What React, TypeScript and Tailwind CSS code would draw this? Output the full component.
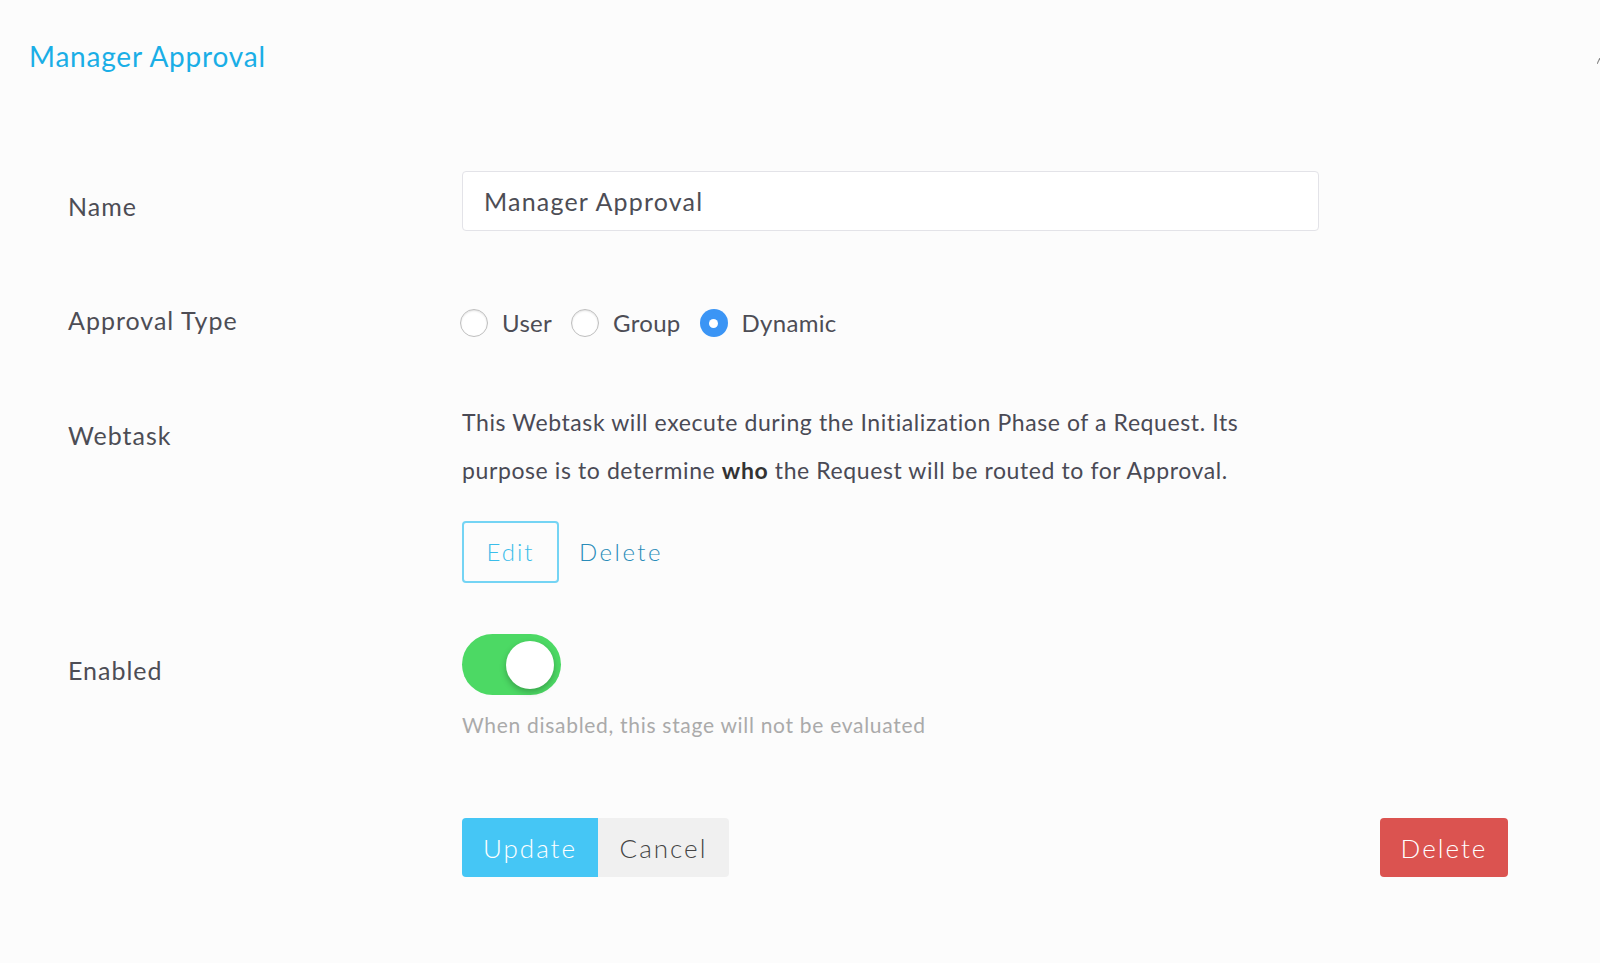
import { useState } from 'react';

const font = { fontFamily: 'Lato, "Open Sans", sans-serif' };

function Radio({ label, checked }: { label: string; checked?: boolean }) {
  return (
    <label className="flex items-center gap-[14px] mr-[19px]">
      {checked ? (
        <span className="w-[28px] h-[28px] rounded-full bg-[#3b95f5] flex items-center justify-center">
          <span className="w-[9px] h-[9px] rounded-full bg-white" />
        </span>
      ) : (
        <span className="w-[28px] h-[28px] rounded-full bg-white border border-[#bfbfbf] shadow-[inset_0_1px_2px_rgba(0,0,0,0.12)]" />
      )}
      <span className="text-[24px] leading-[30px] tracking-[0.3px] text-[#4d4d55]">{label}</span>
    </label>
  );
}

export default function App() {
  const [enabled, setEnabled] = useState(true);

  return (
    <div className="min-h-[963px] w-full bg-[#fcfcfc] overflow-hidden" style={font}>
      <div className="flex items-center justify-between pt-[36px] pl-[29px]">
        <h1 className="text-[28px] leading-[40px] tracking-[0.8px] text-[#1aaee6]">Manager Approval</h1>
        <svg width="3" height="6" viewBox="0 0 3 6" className="mt-[10px]">
          <path d="M0 6 L3 0" stroke="#888" strokeWidth="1.2" />
        </svg>
      </div>

      <div className="grid grid-cols-[394px_1046px] pl-[68px] mt-[95px] text-[#4d4d55] text-[25px] leading-[30px] tracking-[1px]">
        {/* Name */}
        <div className="pt-[20px]">Name</div>
        <div>
          <input
            defaultValue="Manager Approval"
            className="w-[857px] h-[60px] bg-white border border-[#e3e3e8] rounded-[4px] px-[21px] text-[25px] tracking-[1.2px] text-[#4d4d55] outline-none"
            style={font}
          />
        </div>

        {/* Approval type */}
        <div className="mt-[74px]">Approval Type</div>
        <div className="mt-[74px] pt-[3px] flex items-center -ml-[2px] tracking-normal">
          <Radio label="User" />
          <Radio label="Group" />
          <Radio label="Dynamic" checked />
        </div>

        {/* Webtask */}
        <div className="mt-[60px] pt-[22px]">Webtask</div>
        <div className="mt-[60px]">
          <p className="text-[23px] leading-[48px] tracking-[0.6px] text-[#4a4a55]">
            This Webtask will execute during the Initialization Phase of a Request. Its
            <br />
            purpose is to determine <b className="font-bold text-[#333]">who</b> the Request will be routed to for Approval.
          </p>
          <div className="flex items-center gap-[20px] mt-[27px]">
            <button className="w-[97px] h-[62px] rounded-[4px] border-2 border-[#74d4f4] text-[24px] font-light tracking-[2px] text-[#3bbdea]">
              Edit
            </button>
            <button className="text-[24px] font-light tracking-[2.5px] text-[#2a8cb9]">Delete</button>
          </div>
        </div>

        {/* Enabled */}
        <div className="mt-[50px] pt-[22px]">Enabled</div>
        <div className="mt-[50px]">
          <button
            onClick={() => setEnabled(!enabled)}
            className={`relative w-[99px] h-[61px] mt-[1px] rounded-full ${enabled ? 'bg-[#4cd964]' : 'bg-[#e5e5e5]'}`}
          >
            <span
              className={`absolute top-[7px] w-[48px] h-[48px] rounded-full bg-white shadow-[0_3px_6px_rgba(0,0,0,0.25)] ${enabled ? 'left-[44px]' : 'left-[7px]'}`}
            />
          </button>
          <div className="mt-[10px] text-[21px] leading-[30px] tracking-[0.7px] text-[#aaaaaa]">
            When disabled, this stage will not be evaluated
          </div>

          <div className="flex items-center mt-[78px]">
            <button className="w-[136px] h-[59px] rounded-l-[4px] bg-[#45c6f5] text-white text-[26px] font-light tracking-[2px]">
              Update
            </button>
            <button className="w-[131px] h-[59px] rounded-r-[4px] bg-[#f0f0f0] text-[#444] text-[26px] font-light tracking-[2px]">
              Cancel
            </button>
            <button className="ml-auto w-[128px] h-[59px] rounded-[4px] bg-[#db5350] text-white text-[26px] font-light tracking-[2px]">
              Delete
            </button>
          </div>
        </div>
      </div>
    </div>
  );
}
